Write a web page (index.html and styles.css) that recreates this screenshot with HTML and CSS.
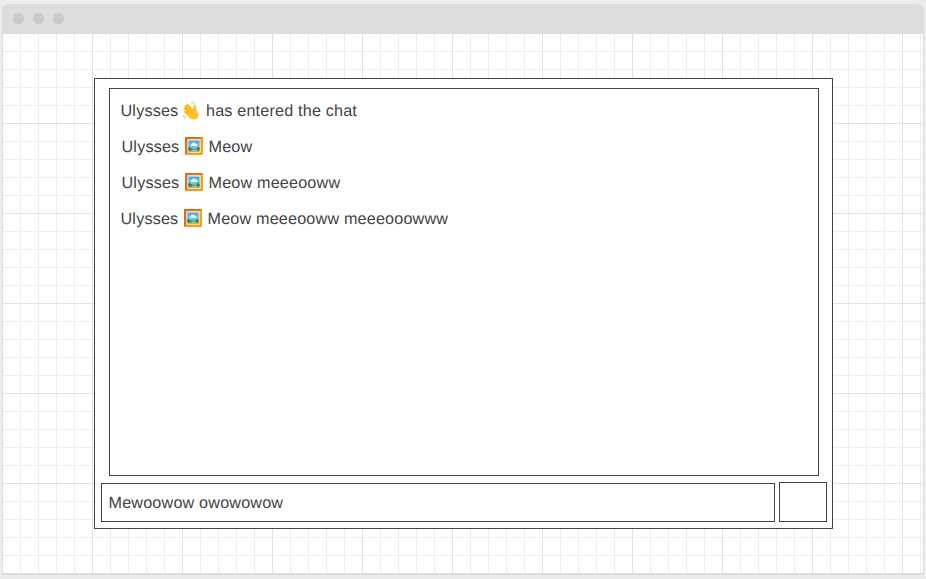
FILE: index.html
```html
<!DOCTYPE html>
<html lang="en">
<head>
<meta charset="utf-8">
<title>Chat</title>
<link rel="stylesheet" href="styles.css">
</head>
<body>
<svg class="defs" aria-hidden="true">
  <defs>
    <linearGradient id="frame" x1="0" x2="1"><stop offset="0" stop-color="#d66b32"/><stop offset=".5" stop-color="#ee8b19"/><stop offset="1" stop-color="#f7ab08"/></linearGradient>
    <linearGradient id="sky" x1="0" x2="0" y1="0" y2="1"><stop offset="0" stop-color="#42a9e5"/><stop offset="1" stop-color="#8ed1ed"/></linearGradient>
    <symbol id="picture" viewBox="0 0 19 19">
      <path d="M0 0h19v19H0z" fill="url(#frame)"/>
      <path d="M0 0h19l-1.5 1.5h-16z" fill="#cc6b2c"/>
      <path d="M19 0v19H0l1.5-1.5h16v-16z" fill="#f8a50b"/>
      <path d="M2.5 2.5h14v14h-14z" fill="#fff3dc"/>
      <path d="M3.6 3.6h11.8v11.8H3.6z" fill="url(#sky)"/>
      <path d="M6 8.9c-.3-1 .4-1.7 1.2-1.5.3-1.8 2.4-2.1 3.2-.8 1-.3 1.8.3 1.7 1.1 1-.1 1.6.5 1.3 1.2-1.5.8-5.8.8-7.4 0z" fill="#f0f8fc"/>
      <path d="M3.6 12.7c2.9-.7 7-.8 11.8 0v2.7H3.6z" fill="#679b45"/>
      <path d="M3.6 11l1.2-.8 1.1 2 .9-.5 1 1.3-4.2.4zM11.6 12.8l1.4-1 .8-1.7 1.6 1.4v1.8z" fill="#287544"/>
      <path d="M7 14c1.7-.7 4.7-.6 6.2 0l-1.3.8H8.5z" fill="#8ecbd0"/>
    </symbol>
    <symbol id="wave" viewBox="0 0 19 19">
      <path d="M2.1 7.1c-.5-1 .6-1.8 1.5-1L3 5.3c-.9-1.2.6-2.2 1.5-1.1l.8.8-.5-.8c-.7-1.2.9-2.2 1.7-1.1l4.8 5.3.3-3.1c.1-1.9 2.5-1.8 2.5-.1l.2 3.4c.2 1.6 2 2.9 2.1 5.3.1 3-2.1 4.8-4.9 4.7-2.2-.1-3.7-1.3-5-2.8l-4.2-4.1c-1.1-1.1.1-2.2 1.2-1.4l.6.4-2.3-2.5c-.5-.6-.1-1.3.3-1.1z" fill="#ffc526"/>
      <path d="M3.3 6l4.6 5M5 4.6l4.4 4.9M4 10.7l2.7 2.6M11.5 8.6c-.2 1.2-1.4 1.5-1.3 3" fill="none" stroke="#e99a1c" stroke-width=".7" stroke-linecap="round"/>
      <path d="M9.5 2.1c1.3.2 2.2.9 2.5 2M10.7.9c1.2.3 2 .9 2.5 1.8M2 14c.3 1.3 1.1 2 2.4 2.2M.7 14.8c.3 1.3 1.1 2 2.3 2.4" fill="none" stroke="#b0bec5" stroke-width=".8" stroke-linecap="round"/>
    </symbol>
  </defs>
</svg>
<div class="browser">
  <header class="bar"><i></i><i></i><i></i></header>
  <main class="canvas">
    <section class="chat">
      <div class="messages">
        <p class="message"><span class="name">Ulysses</span><svg class="emoji hand"><use href="#wave"/></svg><span>has entered the chat</span></p>
        <p class="message nudged"><span class="name">Ulysses</span><svg class="emoji"><use href="#picture"/></svg><span>Meow</span></p>
        <p class="message nudged"><span class="name">Ulysses</span><svg class="emoji"><use href="#picture"/></svg><span>Meow meeeooww</span></p>
        <p class="message"><span class="name">Ulysses</span><svg class="emoji"><use href="#picture"/></svg><span>Meow meeeooww meeeooowww</span></p>
      </div>
      <div class="composer">
        <div class="field">Mewoowow owowowow</div>
        <div class="send"></div>
      </div>
    </section>
  </main>
</div>
</body>
</html>
```
FILE: styles.css
```css
* { box-sizing: border-box; }
body {
  margin: 0;
  height: 579px;
  padding: 4px 2px;
  overflow: hidden;
  background: #ececec;
  color: #444;
  font: 16.2px/36px "Liberation Sans", Arial, sans-serif;
  letter-spacing: .17px;
  text-rendering: geometricPrecision;
}
.defs { display: block; width: 0; height: 0; }
.browser {
  height: 571px;
  border-radius: 6px 6px 0 0;
  overflow: hidden;
}
.bar {
  display: flex;
  align-items: center;
  gap: 9px;
  height: 30px;
  padding: 0 11px 1px;
  background: #ddd;
}
.bar i { width: 11px; height: 11px; border-radius: 50%; background: #c9c9c9; }
.canvas {
  height: 541px;
  padding: 44px 0 0 91px;
  border: solid #ddd;
  border-width: 0 1px 2px;
  background-color: #fff;
  background-image:
    linear-gradient(90deg, #e2e2e2 1px, transparent 1px),
    linear-gradient(#e2e2e2 1px, transparent 1px),
    linear-gradient(90deg, #eee 1px, transparent 1px),
    linear-gradient(#eee 1px, transparent 1px);
  background-size: 90px 90px, 90px 90px, 18px 18px, 18px 18px;
  background-position: -1px -1px;
}
.chat {
  width: 739px;
  height: 451px;
  padding: 9px 5px 6px 6px;
  border: 1px solid #444;
  background: #fff;
}
.messages {
  width: 710px;
  height: 388px;
  margin-left: 8px;
  padding: 3.5px 10px 0 10.5px;
  border: 1px solid #444;
}
.message { display: flex; align-items: center; height: 36px; margin: 0; white-space: pre; }
.nudged { padding-left: 1px; }
.name { width: 58px; }
.emoji { width: 18px; height: 18px; margin: -1px 5.5px 0; }
.hand { width: 19px; height: 19px; margin: 0 5px 0 3.5px; }
.composer { display: flex; align-items: flex-end; gap: 4px; margin-top: 6px; }
.field { width: 674px; height: 39px; padding-left: 6.5px; border: 1px solid #444; line-height: 38px; }
.send { width: 48px; height: 40px; border: 1px solid #444; }
```
